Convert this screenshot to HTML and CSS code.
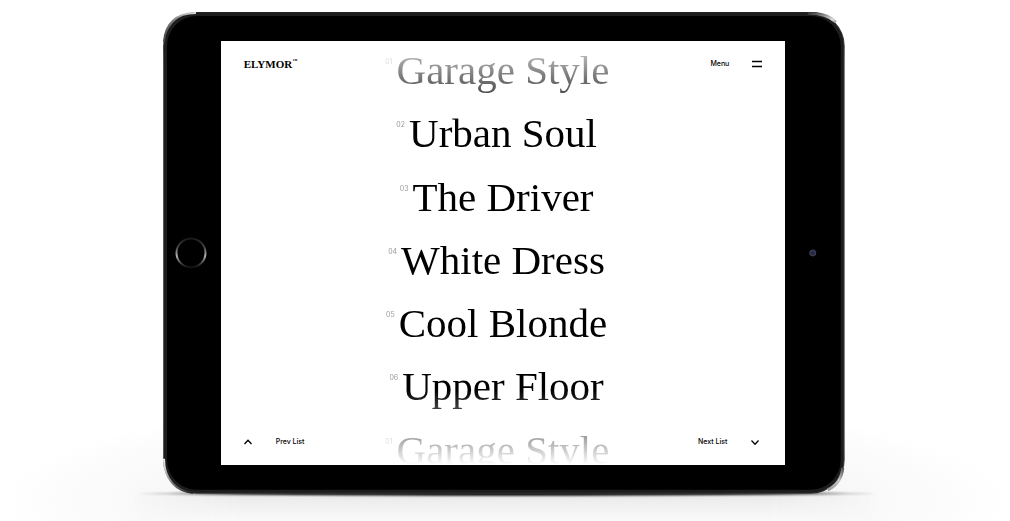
FILE: index.html
```html
<!DOCTYPE html>
<html lang="en">
<head>
<meta charset="utf-8">
<meta name="viewport" content="width=device-width, initial-scale=1">
<title>Elymor</title>
<link rel="stylesheet" href="styles.css">
</head>
<body>
<main class="stage">
  <div class="tablet">
    <svg class="tablet-frame" viewBox="0 0 682 482" aria-hidden="true">
      <defs>
        <linearGradient id="tl" x1="0" y1="1" x2="1" y2="0"><stop offset="0" stop-color="#444"/><stop offset=".5" stop-color="#777"/><stop offset="1" stop-color="#ddd"/></linearGradient>
        <linearGradient id="tr" x1="0" y1="0" x2="1" y2="1"><stop offset="0" stop-color="#333"/><stop offset=".8" stop-color="#ddd"/><stop offset="1" stop-color="#999"/></linearGradient>
        <linearGradient id="bl" x1="0" y1="0" x2="1" y2="1"><stop offset="0" stop-color="#eee"/><stop offset=".5" stop-color="#77777c"/><stop offset="1" stop-color="#222"/></linearGradient>
        <linearGradient id="br" x1="1" y1="0" x2="0" y2="1"><stop offset="0" stop-color="#555"/><stop offset=".4" stop-color="#c4c4c8"/><stop offset="1" stop-color="#98989c"/></linearGradient>
        <linearGradient id="ring" x1="0" y1="0" x2="0" y2="1"><stop offset="0" stop-color="#181818"/><stop offset=".3" stop-color="#444"/><stop offset=".6" stop-color="#b4b4b8"/><stop offset=".85" stop-color="#44444a"/><stop offset="1" stop-color="#111"/></linearGradient>
        <linearGradient id="edge" x1="0" y1="0" x2="0" y2="1"><stop offset="0" stop-color="#222"/><stop offset=".1" stop-color="#555"/><stop offset=".9" stop-color="#555"/><stop offset="1" stop-color="#333"/></linearGradient>
      </defs>
      <rect width="682" height="482" rx="34" fill="url(#edge)"/>
      <rect x="1" y="1" width="680" height="480" rx="33" fill="#1d1d1e"/>
      <rect x="4" y="4" width="674" height="474" rx="30" fill="#000"/>
      <path d="M1 30C2 12 13 1 33 1" fill="none" stroke="url(#tl)" stroke-width="2"/>
      <path d="M645 1C658 1 667 4 673 10" fill="none" stroke="url(#tr)" stroke-width="3"/>
      <path d="M1 447C1 467 13 480 30 481" fill="none" stroke="url(#bl)" stroke-width="2"/>
      <path d="M680 456C679 466 674 474 665 478" fill="none" stroke="url(#br)" stroke-width="3"/>
      <circle cx="28" cy="241" r="14.5" fill="#000" stroke="url(#ring)" stroke-width="2"/>
      <circle cx="650" cy="241" r="3.5" fill="#3d3d45"/>
      <circle cx="650" cy="241" r="2" fill="#1c2758"/>
    </svg>
    <div class="screen">
      <header class="bar">
        <a class="logo" href="#">ELYMOR<span class="mark">™</span></a>
        <button class="control" type="button">Menu
          <svg class="icon" viewBox="0 0 10 10" aria-hidden="true"><path d="M0 2.5h10M0 7.5h10"/></svg>
        </button>
      </header>
      <nav class="works" aria-label="Works">
        <a class="work" href="#"><span class="number">01</span>Garage Style</a>
        <a class="work" href="#"><span class="number">02</span>Urban Soul</a>
        <a class="work" href="#"><span class="number">03</span>The Driver</a>
        <a class="work" href="#"><span class="number">04</span>White Dress</a>
        <a class="work" href="#"><span class="number">05</span>Cool Blonde</a>
        <a class="work" href="#"><span class="number">06</span>Upper Floor</a>
        <a class="work" href="#"><span class="number">01</span>Garage Style</a>
      </nav>
      <footer class="bar bar-bottom">
        <button class="control" type="button">
          <svg class="icon" viewBox="0 0 10 10" aria-hidden="true"><path d="M1.500 7L5 3.300L8.500 7"/></svg>
          Prev List</button>
        <button class="control" type="button">Next List
          <svg class="icon" viewBox="0 0 10 10" aria-hidden="true"><path d="M1.500 3.500L5 7.200L8.500 3.500"/></svg>
        </button>
      </footer>
    </div>
  </div>
  <div class="floor" aria-hidden="true"></div>
</main>
</body>
</html>
```
FILE: styles.css
```css
* { box-sizing: border-box; }

body {
  margin: 0;
  background: #fff;
  color: #000;
  font-family: Inter, "Liberation Sans", sans-serif;
}

.stage {
  display: grid;
  justify-items: center;
  padding-top: 12px;
  min-height: 100vh;
  grid-template-rows: auto 1fr;
  overflow: hidden;
  background: radial-gradient(50% 20% at 50% 96%, #f6f6f6 60%, #fff);
}

.tablet {
  position: relative;
  z-index: 1;
  display: grid;
  width: 67.5%;
  aspect-ratio: 682 / 482;
  padding: 29px 5.9% 29px 5.7%;
  margin-right: 2px;
}

.tablet::before {
  content: "";
  position: absolute;
  z-index: -1;
  left: -4%;
  right: -5%;
  bottom: -2px;
  height: 5px;
  border-radius: 50%;
  background: radial-gradient(closest-side, #000 70%, #0006 90%, #0000);
  filter: blur(1px);
}

.tablet-frame {
  position: absolute;
  inset: 0;
  width: 100%;
  height: 100%;
}

.screen {
  position: relative;
  display: grid;
  grid-template: 1fr / 1fr;
  min-height: 0;
  overflow: hidden;
  background: #fff;
}

.bar {
  grid-area: 1 / 1;
  align-self: start;
  z-index: 1;
  display: flex;
  align-items: center;
  justify-content: space-between;
  height: 46px;
  padding: 0 23px;
}

.bar-bottom { align-self: end; padding: 0 25px 0 22px; }

.logo {
  display: flex;
  color: inherit;
  font: bold 11px/14px "Liberation Serif", serif;
  text-decoration: none;
}

.mark { font-size: 5px; line-height: 8px; }

.control {
  display: flex;
  align-items: center;
  gap: 23px;
  padding: 0;
  border: 0;
  background: none;
  color: inherit;
  font: 500 7px/12px Inter, sans-serif;
}

.icon {
  width: 10px;
  height: 10px;
  fill: none;
  stroke: currentColor;
  stroke-width: 1.3;
}

.works {
  grid-area: 1 / 1;
  display: grid;
  grid-template-rows: repeat(7, 1fr);
  justify-items: center;
  min-height: 0;
  margin-bottom: -19px;
  mask-image: linear-gradient(#0002, #000 80px, #000 calc(100% - 94px), #0000 calc(100% - 19px));
}

.work {
  position: relative;
  color: inherit;
  font: 41px/58px "Liberation Serif", serif;
  text-decoration: none;
  white-space: nowrap;
}

.number {
  position: absolute;
  top: 15px;
  right: 100%;
  padding-right: 4px;
  color: #999;
  font: 7px/12px Inter, sans-serif;
}

.floor {
  width: 74%;
  background: linear-gradient(#e9e9e9, #fafafa);
  mask-image: linear-gradient(90deg, #0000, #000 15%, #000 85%, #0000);
}
```
